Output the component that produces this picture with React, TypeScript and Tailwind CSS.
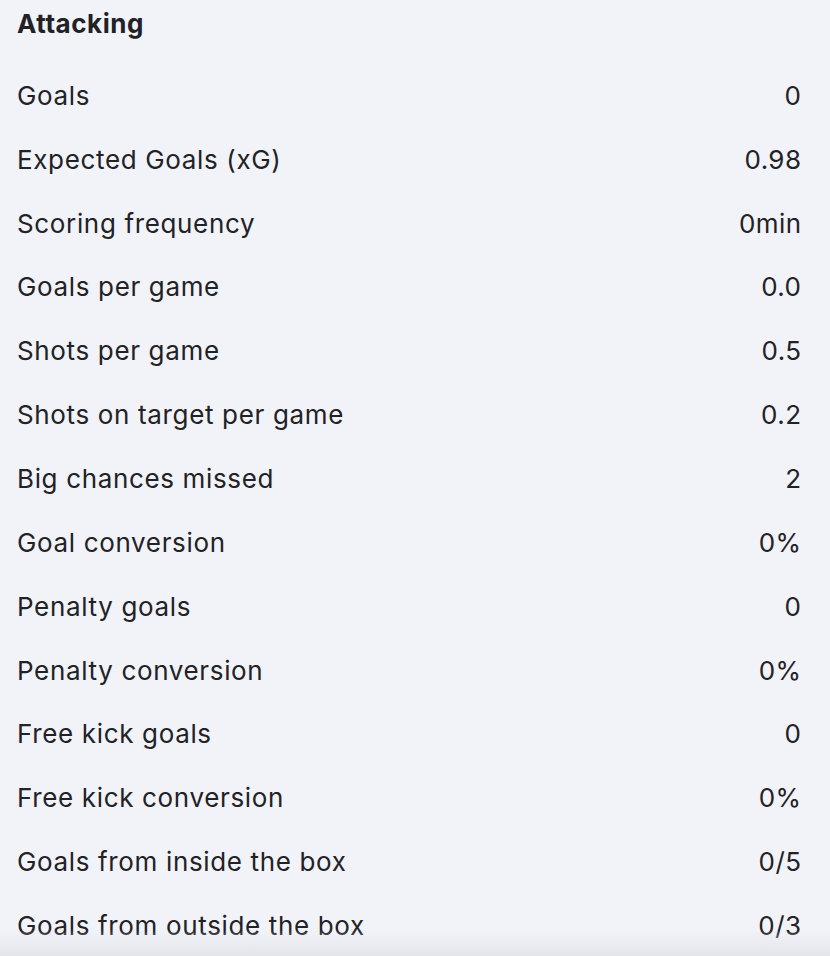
const rows: [string, string][] = [
  ['Goals', '0'],
  ['Expected Goals (xG)', '0.98'],
  ['Scoring frequency', '0min'],
  ['Goals per game', '0.0'],
  ['Shots per game', '0.5'],
  ['Shots on target per game', '0.2'],
  ['Big chances missed', '2'],
  ['Goal conversion', '0%'],
  ['Penalty goals', '0'],
  ['Penalty conversion', '0%'],
  ['Free kick goals', '0'],
  ['Free kick conversion', '0%'],
  ['Goals from inside the box', '0/5'],
  ['Goals from outside the box', '0/3'],
];

export default function App() {
  return (
    <div className="relative h-[956px] w-[830px] overflow-hidden bg-[#f2f3f8] font-['Inter',sans-serif] text-[#222226]">
      <div className="flex h-[64px] items-start pl-[17px] pt-[8px]">
        <h2 className="text-[26px] font-bold leading-[32px] tracking-[0.55px]">Attacking</h2>
      </div>
      <div className="flex flex-col">
        {rows.map(([label, value]) => (
          <div
            key={label}
            className="flex h-[63.85px] items-center justify-between pl-[17px] pr-[29px] text-[26px] leading-[32px]"
          >
            <span className="tracking-[0.65px]">{label}</span>
            <span className="tracking-[0.4px] -mr-[0.4px]">{value}</span>
          </div>
        ))}
      </div>
      <div className="pointer-events-none absolute bottom-0 left-0 h-[26px] w-full bg-gradient-to-b from-transparent to-[#e4e5ea]" />
    </div>
  );
}
